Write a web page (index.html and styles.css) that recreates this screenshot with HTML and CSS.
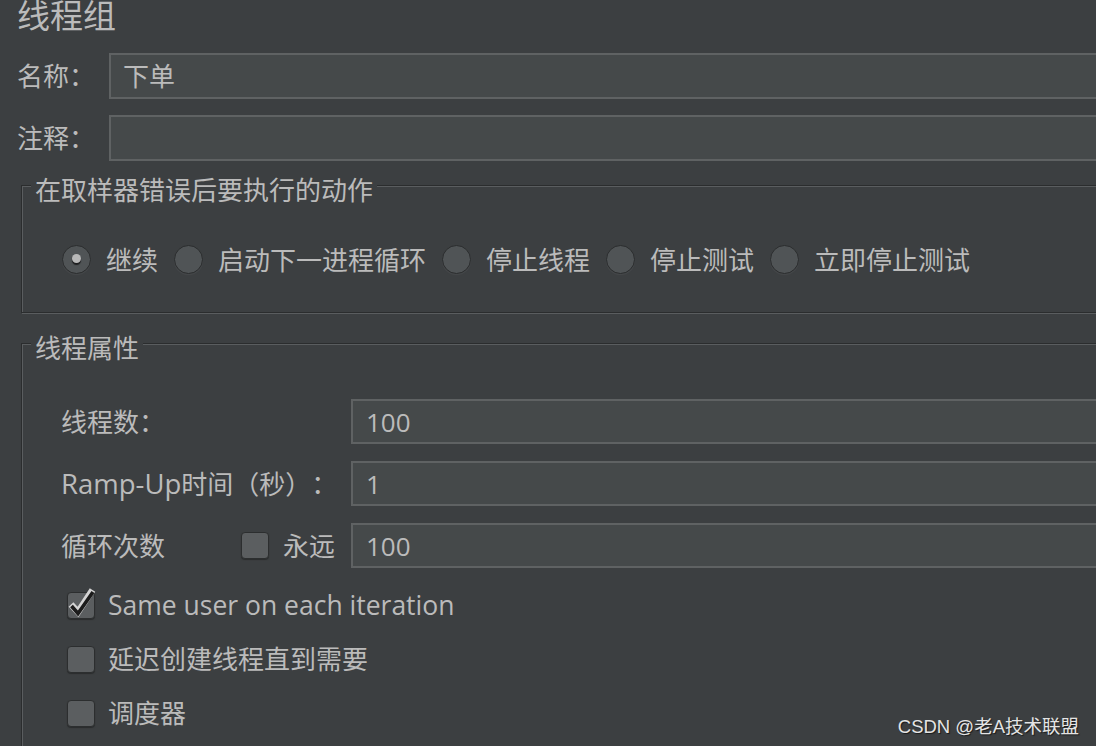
FILE: index.html
```html
<!DOCTYPE html>
<html lang="zh-CN">
<head>
<meta charset="utf-8">
<title>线程组</title>
<link rel="stylesheet" href="styles.css">
</head>
<body>
<div class="panel">
  <h1 class="title">线程组</h1>
  <div class="field-row name">
    <span class="lbl">名称：</span>
    <div class="input">下单</div>
  </div>
  <div class="field-row comment">
    <span class="lbl">注释：</span>
    <div class="input"></div>
  </div>

  <fieldset class="group action">
    <legend>在取样器错误后要执行的动作</legend>
    <div class="radios">
      <label class="opt"><span class="radio checked"></span><span>继续</span></label>
      <label class="opt"><span class="radio"></span><span>启动下一进程循环</span></label>
      <label class="opt"><span class="radio"></span><span>停止线程</span></label>
      <label class="opt"><span class="radio"></span><span>停止测试</span></label>
      <label class="opt"><span class="radio"></span><span>立即停止测试</span></label>
    </div>
  </fieldset>

  <fieldset class="group thread">
    <legend>线程属性</legend>
    <div class="props">
      <span class="plbl">线程数：</span>
      <div class="input">100</div>
      <span class="plbl"><span class="latin-wide">Ramp-Up</span>时间（秒）：</span>
      <div class="input">1</div>
      <div class="plbl loop">
        <span>循环次数</span>
        <span class="forever"><span class="box"></span><span>永远</span></span>
      </div>
      <div class="input">100</div>
    </div>
    <div class="checks">
      <div class="check-row">
        <span class="box checked">
          <svg class="tick" width="28" height="28" viewBox="0 0 28 28">
            <path d="M4 12.5 L11 20 L25.5 -2" fill="none" stroke="#d4d4d4" stroke-width="6.5" stroke-linejoin="miter"/>
            <path d="M4.5 14 L11 21.5 L26 0" fill="none" stroke="#1c1c1c" stroke-width="3.6" stroke-linejoin="miter"/>
          </svg>
        </span>
        <span class="latin">Same user on each iteration</span>
      </div>
      <div class="check-row">
        <span class="box"></span>
        <span>延迟创建线程直到需要</span>
      </div>
      <div class="check-row">
        <span class="box"></span>
        <span>调度器</span>
      </div>
    </div>
  </fieldset>
</div>
<div class="watermark">CSDN @老A技术联盟</div>
</body>
</html>
```

FILE: styles.css
```css
* {
  box-sizing: border-box;
}

html,
body {
  margin: 0;
}

body {
  position: relative;
  width: 1096px;
  height: 746px;
  overflow: hidden;
  background: #3c3f41;
  color: #bbbbbb;
  font-family: "Open Sans", "Noto Sans CJK SC", sans-serif;
  font-size: 26px;
  text-spacing-trim: space-all;
}

.panel {
  padding-left: 17px;
}

.title {
  margin: 0;
  font-size: 33px;
  line-height: 32px;
  font-weight: normal;
  color: #bbbbbb;
}

.field-row {
  display: flex;
  align-items: center;
  height: 46px;
  margin-right: -40px;
}

.field-row.name {
  margin-top: 21px;
}

.field-row.comment {
  margin-top: 16px;
}

.lbl {
  flex: none;
  width: 92px;
  line-height: 30px;
}

.input {
  flex: 1;
  height: 100%;
  display: flex;
  align-items: center;
  padding-left: 12px;
  background: #45494a;
  border: 2px solid #5f6263;
  line-height: 30px;
  color: #bbbbbb;
}

.group {
  min-width: 0;
  margin: 6px -40px 0 4px;
  padding: 37px 0 35px;
  border: 1px solid #2b2d2e;
  box-shadow: inset 1px 1px 0 #5a5d5f, 1px 1px 0 #5a5d5f;
}

.group legend {
  margin-left: 9px;
  padding: 9px 4px 0;
  line-height: 28px;
  background: #3c3f41;
}

.radios {
  display: flex;
  align-items: center;
  height: 36px;
  padding-left: 40px;
}

.opt {
  display: flex;
  align-items: center;
  gap: 15px;
  margin-right: 16px;
}

.radio {
  position: relative;
  flex: none;
  width: 29px;
  height: 29px;
  border-radius: 50%;
  background: #505456;
  border: 1px solid #2a2c2d;
  box-shadow: 0 1px 1px #46494b;
}

.radio.checked::after {
  content: "";
  position: absolute;
  left: 9px;
  top: 8px;
  width: 9px;
  height: 9px;
  border-radius: 50%;
  background: #b8b8b8;
  box-shadow: 0 2px 1px #1e1f20;
}

.group.thread {
  margin-top: 12px;
  padding-bottom: 40px;
}

.props {
  display: grid;
  grid-template-columns: 290px 1fr;
  grid-auto-rows: 45px;
  row-gap: 17px;
  align-items: center;
  padding-left: 39px;
}

.props .input {
  height: 45px;
  padding-left: 13px;
}

.plbl {
  line-height: 30px;
  white-space: nowrap;
}

.latin-wide {
  font-size: 27.5px;
}

.loop {
  display: flex;
  align-items: center;
}

.forever {
  margin-left: auto;
  margin-right: 16px;
  display: flex;
  align-items: center;
  gap: 14px;
}

.box {
  position: relative;
  flex: none;
  width: 28px;
  height: 27px;
  border-radius: 4px;
  background: #5b5e60;
  border: 1px solid #2c2e2f;
  box-shadow: 0 1px 1px #2a2c2d;
}

.tick {
  position: absolute;
  left: -1px;
  top: -1px;
  overflow: visible;
}

.checks {
  display: flex;
  flex-direction: column;
  gap: 18px;
  margin-top: 19px;
  padding-left: 45px;
}

.check-row {
  display: flex;
  align-items: center;
  height: 36px;
  gap: 13px;
  line-height: 30px;
}

.latin {
  font-size: 26.5px;
}

.watermark {
  position: absolute;
  right: 17px;
  bottom: 9px;
  font-family: "Liberation Sans", "Noto Sans CJK SC", sans-serif;
  font-size: 18.5px;
  line-height: 20px;
  color: #e4e4e4;
  text-shadow: 1px 1px 1px rgba(0, 0, 0, 0.6);
}
```
